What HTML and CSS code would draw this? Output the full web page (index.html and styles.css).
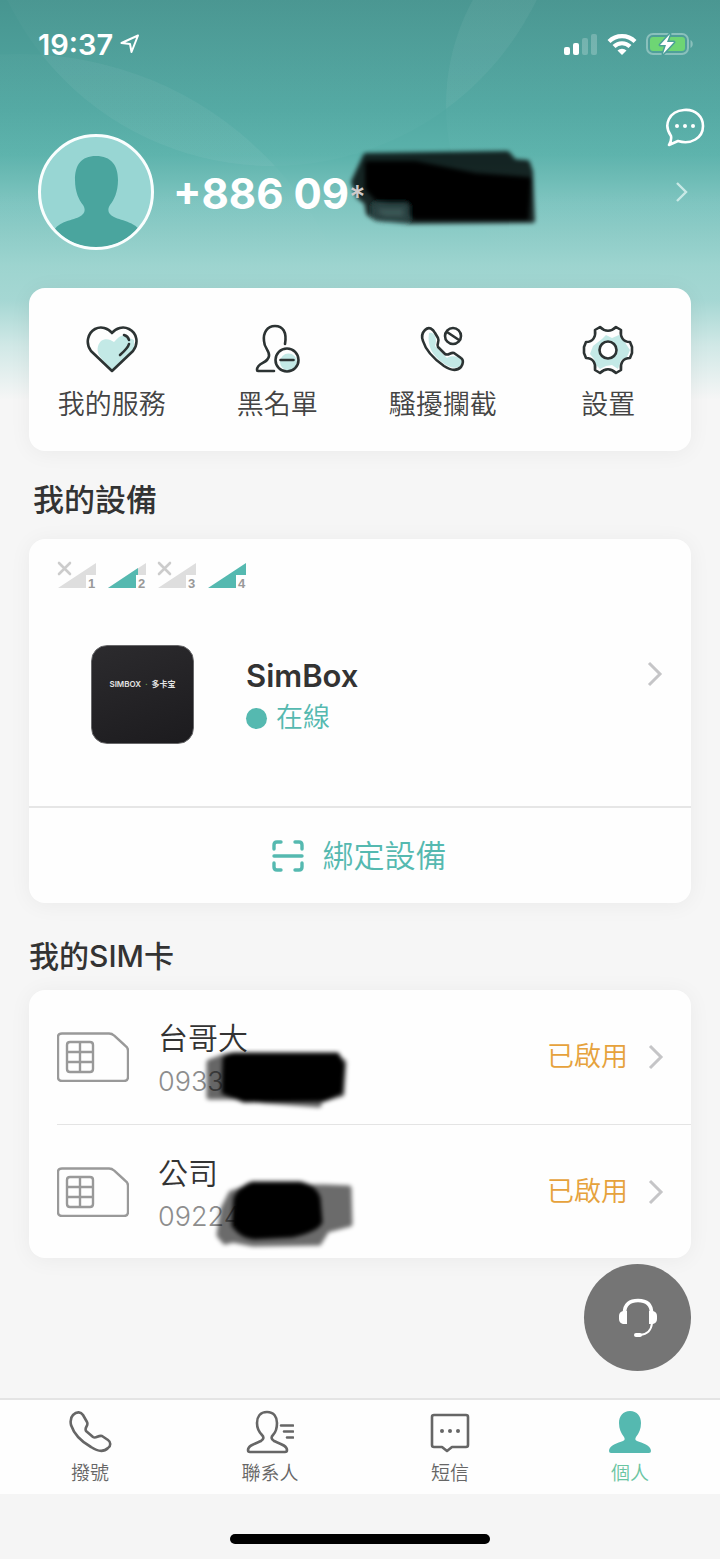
FILE: index.html
```html
<!DOCTYPE html>
<html lang="zh-Hant">
<head>
<meta charset="utf-8">
<meta name="viewport" content="width=device-width, initial-scale=1">
<title>個人</title>
<link rel="stylesheet" href="styles.css">
</head>
<body>
<div class="app">
  <svg class="backdrop" viewBox="0 0 720 300" preserveAspectRatio="xMidYMin slice" aria-hidden="true">
    <defs>
      <linearGradient id="fade" gradientUnits="userSpaceOnUse" x1="0" y1="0" x2="0" y2="270">
        <stop offset="0" stop-color="#fff" stop-opacity=".02"/>
        <stop offset=".6" stop-color="#fff" stop-opacity=".02"/>
        <stop offset="1" stop-color="#fff" stop-opacity="0"/>
      </linearGradient>
      <clipPath id="disc"><circle cx="272" cy="-128" r="294"/></clipPath>
    </defs>
    <circle cx="272" cy="-128" r="294" fill="url(#fade)"/>
    <circle cx="20" cy="400" r="346" fill="url(#fade)"/>
    <circle cx="666" cy="105" r="220" fill="url(#fade)"/>
    <g clip-path="url(#disc)" fill="#fff" fill-opacity=".03">
      <circle cx="20" cy="400" r="346"/>
      <circle cx="666" cy="105" r="220"/>
    </g>
  </svg>

  <header class="status">
    <div class="status-time">
      <span>19:37</span>
      <svg width="20" height="20" viewBox="0 0 20 20" fill="none" stroke="#fff" stroke-width="2" stroke-linejoin="round" aria-hidden="true"><path d="M18 1.500 1.500 9 10 10 11.500 18z"/></svg>
    </div>
    <div class="status-icons">
      <svg width="34" height="22" viewBox="0 0 34 22" fill="#fff" aria-hidden="true">
        <rect x="0" y="14" width="6" height="8" rx="2"/><rect x="9" y="10" width="6" height="12" rx="2"/>
        <rect x="18" y="5" width="6" height="17" rx="2" opacity=".22"/><rect x="27" y="1" width="6" height="21" rx="2" opacity=".22"/>
      </svg>
      <svg width="30" height="22" viewBox="0 0 30 22" aria-hidden="true">
        <g fill="none" stroke="#fff" stroke-width="4.200"><path d="M2 8.500a18.500 18.500 0 0 1 26 0"/><path d="M7 13.500a11.500 11.500 0 0 1 16 0"/></g>
        <path d="M10.500 17.500a6.500 6.500 0 0 1 9 0L15 22z" fill="#fff"/>
      </svg>
      <svg width="48" height="24" viewBox="0 0 48 24" aria-hidden="true">
        <rect x="1" y="2" width="41" height="20" rx="6" fill="none" stroke="#8ac0bc" stroke-width="2"/>
        <path d="M44.500 8c3 1.500 3 6.500 0 8z" fill="#8ac0bc"/>
        <rect x="4" y="5" width="35" height="14" rx="3" fill="#6ed574"/>
        <path d="M24 2 14 13h6l-3 9 11-12h-7z" fill="#fff" stroke="#4b9f99" stroke-width="3" stroke-linejoin="round" paint-order="stroke"/>
      </svg>
    </div>
  </header>

  <section class="profile">
    <svg class="avatar" width="116" height="116" viewBox="0 0 116 116" role="img" aria-label="頭像">
      <defs><clipPath id="face"><circle cx="58" cy="58" r="55.500"/></clipPath></defs>
      <circle cx="58" cy="58" r="56.500" fill="#98d6d3"/>
      <path clip-path="url(#face)" fill="#4aa59e" d="M58 22c-15 0-21 9-21 24 0 12 4 20 8 25 3 5 2 9-4 12-8 4-23 4-27 18v16h90v-16c-4-13-20-14-28-18-6-3-7-7-4-12 4-5 8-13 8-25 0-15-7-24-22-24z"/>
      <circle cx="58" cy="58" r="56.500" fill="none" stroke="#fafefe" stroke-width="3"/>
    </svg>
    <div class="phone">
      <svg class="scribble" width="192" height="84" viewBox="0 0 192 84" aria-hidden="true">
        <defs>
          <filter id="soft" x="-10%" y="-20%" width="120%" height="140%"><feGaussianBlur stdDeviation="2"/></filter>
        </defs>
        <g filter="url(#soft)" stroke-linejoin="round" stroke-width="6">
          <path d="M11 10 152 8l7 8 13 1 3 9 2 48-122 1-33-3-8-5-2-11-8-6-5-14z" fill="#000" stroke="#000" opacity=".8"/>
          <path d="M13 18h47l60 12 53 4-2 37H60L48 56 22 52 13 42z" fill="#000" stroke="#000"/>
          <path d="M21 60h30v13H30l-9-4z" fill="#3b5654" stroke="#2c4342"/>
        </g>
      </svg>
      <span class="phone-text">+886 09<span class="phone-star">*</span></span>
    </div>
    <div class="profile-actions">
      <button class="icon-button" aria-label="訊息">
        <svg width="42" height="40" viewBox="0 0 42 40" aria-hidden="true">
          <path d="M7 28C-1 17 5 3 20 2c12-1 19 7 19 16 0 12-12 19-25 15L5 37c2-3 2.500-6 2-9z" fill="none" stroke="#fff" stroke-width="2.600" stroke-linejoin="round"/>
          <g fill="#fff"><circle cx="13" cy="18" r="2"/><circle cx="21" cy="18" r="2"/><circle cx="29" cy="18" r="2"/></g>
        </svg>
      </button>
      <button class="icon-button icon-button--next" aria-label="個人資料">
        <svg width="14" height="22" viewBox="0 0 14 22" fill="none" stroke="#c9e9e6" stroke-width="2.400" aria-hidden="true"><path d="m2 2 9 9-9 9"/></svg>
      </button>
    </div>
  </section>

  <main class="main">
    <section class="card shortcuts">
      <button class="shortcut">
        <svg width="52" height="52" viewBox="0 0 52 52" fill="none" aria-hidden="true">
          <path d="M26 47 15 34c-5-6-4-13 0-17 4-3 9-2 13 1 4-4 6-7 11-6l9 4v10z" fill="#c3e9e6"/>
          <path d="M26 47 5 27C-1 19 2 9 9 5c6-3 13-1 17 4 4-5 11-7 17-4 8 4 10 14 4 22z" stroke="#2c3333" stroke-width="2.600" stroke-linejoin="round"/>
          <path d="M38 11q4 1 5 5M43 20q-1 4-9 11" stroke="#2c3333" stroke-width="2.600" stroke-linecap="round"/>
        </svg>
        <span>我的服務</span>
      </button>
      <button class="shortcut">
        <svg width="52" height="52" viewBox="0 0 52 52" fill="none" stroke="#2c3333" stroke-width="2.600" stroke-linecap="round" aria-hidden="true">
          <path d="M34 20C36 8 32 2 24 2s-12 7-11 15c0 7 6 10 5 15-1 8-12 6-12 14q0 1 1 1h16" stroke-linejoin="round"/>
          <circle cx="37.500" cy="38" r="8.500" fill="#c3e9e6" stroke="none"/>
          <circle cx="36" cy="36" r="11.500"/><path d="M29.500 36h13"/>
        </svg>
        <span>黑名單</span>
      </button>
      <button class="shortcut">
        <svg width="52" height="52" viewBox="0 0 52 52" fill="none" stroke="#2c3333" stroke-width="2.600" stroke-linecap="round" stroke-linejoin="round" aria-hidden="true">
          <path d="M12 9c5-2 9 6 6 13l12 12c4-4 15-1 17 4-4 8-13 7-21 1C15 31 10 22 12 9z" fill="#c3e9e6" stroke="none"/>
          <path d="M8 6c4-4 8-1 10 3l3 5c2 4-2 6 0 9l7 7c4 2 5-2 9-1l7 5c3 2 2 6 0 9-5 5-11 3-17-1C17 35 9 27 6 17 4 12 5 9 8 6z"/>
          <circle cx="36" cy="12" r="8"/><path d="m30 8 12 8"/>
        </svg>
        <span>騷擾攔截</span>
      </button>
      <button class="shortcut">
        <svg width="52" height="52" viewBox="0 0 52 52" fill="none" stroke="#2c3333" stroke-width="2.600" stroke-linejoin="round" aria-hidden="true">
          <path d="m20 15 4-4 6 3 7-3 4 3 3 6 4 6-3 7-6 3-3 9-6-4-6 1-6 3-4-4-2-6-4-5 3-8z" fill="#c3e9e6" stroke="none"/>
          <path d="m18 3-5 3c1 7-2 12-9 12l-2 5v6l2 5c7 0 10 5 9 12l5 3c5-5 11-5 16 0l5-3c-1-7 2-12 9-12l2-5v-6l-2-5c-7 0-10-5-9-12l-5-3c-5 5-11 5-16 0z"/>
          <circle cx="26" cy="26" r="8.500" fill="#fff"/>
        </svg>
        <span>設置</span>
      </button>
    </section>

    <h2 class="section-title section-title--inset">我的設備</h2>
    <section class="card">
      <div class="device">
        <div class="signals">
          <svg class="signal" width="40" height="29" viewBox="0 0 40 29" role="img"><path d="m1 27 38-25v12H29v13z" fill="#dedede"/><path d="m2 2 11 11M13 2 2 13" stroke="#ccc" stroke-width="2.600" stroke-linecap="round"/><text x="31" y="27">1</text></svg>
          <svg class="signal" width="40" height="29" viewBox="0 0 40 29" role="img"><path d="m1 27 38-25v12H29v13z" fill="#dedede"/><path d="m1 27 30-20v7h-2v13z" fill="#55b9b0"/><text x="31" y="27">2</text></svg>
          <svg class="signal" width="40" height="29" viewBox="0 0 40 29" role="img"><path d="m1 27 38-25v12H29v13z" fill="#dedede"/><path d="m2 2 11 11M13 2 2 13" stroke="#ccc" stroke-width="2.600" stroke-linecap="round"/><text x="31" y="27">3</text></svg>
          <svg class="signal" width="40" height="29" viewBox="0 0 40 29" role="img"><path d="m1 27 38-25v12H29v13z" fill="#55b9b0"/><text x="31" y="27">4</text></svg>
        </div>
        <a class="device-row" href="#device">
          <span class="device-photo"><span>SIMBOX</span><i>·</i><span>多卡宝</span></span>
          <span class="device-info">
            <strong class="device-name">SimBox</strong>
            <span class="device-state">在線</span>
          </span>
          <svg class="chevron" width="18" height="28" viewBox="0 0 18 28" aria-hidden="true"><path d="m4 3 11 11L4 25"/></svg>
        </a>
      </div>
      <button class="bind">
        <svg width="34" height="34" viewBox="0 0 34 34" fill="none" stroke="#55b9b0" stroke-width="3.400" stroke-linecap="round" aria-hidden="true"><path d="M3 10V6q0-3 3-3h4M24 3h4q3 0 3 3v4M3 24v4q0 3 3 3h4M24 31h4q3 0 3-3v-4M3 17h28"/></svg>
        <span>綁定設備</span>
      </button>
    </section>

    <h2 class="section-title">我的SIM卡</h2>
    <section class="card">
      <a class="sim" href="#sim1">
        <svg class="sim-icon" width="72" height="50" viewBox="0 0 72 50" aria-hidden="true"><path d="M5 1.500h47q3 0 5 2l11 10q3 2 3 5V45q0 4-4 4H5q-4 0-4-4V5q0-3.500 4-3.500zM13 10h20q3 0 3 3v24q0 3-3 3H13q-3 0-3-3V13q0-3 3-3zM23 10v30M10 20h26M10 30h26"/></svg>
        <span class="sim-body">
          <span class="sim-info">
            <span class="sim-name">台哥大</span>
            <span class="sim-number">0933
              <svg class="sim-scribble" width="154" height="64" viewBox="0 0 154 64" aria-hidden="true"><g filter="url(#soft)"><path d="M8 14 24 8h110l9 6-2 32-22 6-1 5-54-4-22-4H8z" opacity=".6"/><path d="M24 11q4-4 10-4h102l5 10-2 27-16 7-80 1-20-8z"/></g></svg>
            </span>
          </span>
          <span class="sim-state">已啟用</span>
          <svg class="chevron" width="18" height="28" viewBox="0 0 18 28" aria-hidden="true"><path d="m4 3 11 11L4 25"/></svg>
        </span>
      </a>
      <a class="sim sim--ruled" href="#sim2">
        <svg class="sim-icon" width="72" height="50" viewBox="0 0 72 50" aria-hidden="true"><path d="M5 1.500h47q3 0 5 2l11 10q3 2 3 5V45q0 4-4 4H5q-4 0-4-4V5q0-3.500 4-3.500zM13 10h20q3 0 3 3v24q0 3-3 3H13q-3 0-3-3V13q0-3 3-3zM23 10v30M10 20h26M10 30h26"/></svg>
        <span class="sim-body">
          <span class="sim-info">
            <span class="sim-name">公司</span>
            <span class="sim-number">09224
              <svg class="sim-scribble sim-scribble--wide" width="154" height="74" viewBox="0 0 154 74" aria-hidden="true"><g filter="url(#soft)"><path d="m8 58 4-26 8-16 18-6h76l24 1 1 36-23 6-8 13-66 1-20-4-8 2z" opacity=".58"/><path d="M25 21q5-10 16-14h48q14 3 18 14l2 24q-4 8-28 13l-38 2q-12-1-20-12z"/></g></svg>
            </span>
          </span>
          <span class="sim-state">已啟用</span>
          <svg class="chevron" width="18" height="28" viewBox="0 0 18 28" aria-hidden="true"><path d="m4 3 11 11L4 25"/></svg>
        </span>
      </a>
    </section>

    <button class="support" aria-label="客服">
      <svg width="40" height="40" viewBox="0 0 40 40" fill="none" stroke="#fff" aria-hidden="true">
        <path d="M6.500 15C6.500 6 12 2.500 20 2.500S33.500 6 33.500 15" stroke-width="3.600"/>
        <path d="M9 13v13H5q-4-1-4-5v-3q0-4 4-5zM31 13v13h4q4-1 4-5v-3q0-4-4-5z" fill="#fff" stroke="none"/>
        <path d="M34 25q-1 11-12 12" stroke-width="2"/><rect x="16" y="35" width="8" height="4" rx="2" fill="#fff" stroke="none"/>
      </svg>
    </button>
  </main>

  <nav class="tabs">
    <a class="tab" href="#dial">
      <svg width="44" height="44" viewBox="0 0 44 44" aria-hidden="true"><path d="M5 5c4-4 8-3 10 0l4 7c2 4-3 5-1 9l7 6c3 2 5-2 9-1l6 4c3 2 3 6 0 8-5 5-11 3-17-1C14 32 6 24 3 15 2 10 3 7 5 5z"/></svg>
      <span>撥號</span>
    </a>
    <a class="tab" href="#contacts">
      <svg width="48" height="44" viewBox="0 0 48 44" aria-hidden="true"><path d="M21 2C14 2 11 7 11 13c0 5 2 9 5 12 2 2 2 4-1 6-4 2-13 4-13 9q0 2 2 2h35q2 0 2-2c0-5-9-7-13-9-3-2-3-4-1-6 3-3 4-7 4-12 0-6-3-11-10-11zM35 15.500h12M38 21.500h9M41 27.500h6"/></svg>
      <span>聯系人</span>
    </a>
    <a class="tab" href="#messages">
      <svg width="44" height="44" viewBox="0 0 44 44" aria-hidden="true"><path d="M6 5h32q2 0 2 2v28q0 2-2 2H24l-5 4-5-4H6q-2 0-2-2V7q0-2 2-2z"/><g class="tab-dots"><circle cx="14" cy="21" r="2"/><circle cx="22" cy="21" r="2"/><circle cx="30" cy="21" r="2"/></g></svg>
      <span>短信</span>
    </a>
    <a class="tab tab--active" href="#me" aria-current="page">
      <svg width="44" height="44" viewBox="0 0 44 44" aria-hidden="true"><path d="M22 1c-7 0-11 5-11 12 0 6 2 10 5 14 1 2 1 3-1 4-5 2-14 4-14 10q0 2 2 2h38q2 0 2-2c0-6-9-8-14-10-2-1-2-2-1-4 3-4 5-8 5-14 0-7-4-12-11-12z"/></svg>
      <span>個人</span>
    </a>
  </nav>
  <div class="home"><div class="home-bar"></div></div>
</div>
</body>
</html>
```
FILE: styles.css
```css
* { box-sizing: border-box; }

body {
  margin: 0;
  font-family: Inter, "Noto Sans CJK TC", sans-serif;
  color: #333;
  background: #f6f6f6;
}

button {
  border: 0;
  padding: 0;
  background: none;
  font: inherit;
  color: inherit;
  cursor: pointer;
}

a { color: inherit; text-decoration: none; }
svg { display: block; flex: none; }

.app {
  position: relative;
  display: flex;
  flex-direction: column;
  min-height: 100vh;
  background: linear-gradient(#479590 0, #52a8a2 110px, #5bb2ab 155px, #7fc5c0 205px, #9dd4cf 265px, #a5d7d3 300px, #d0e8e6 345px, #f6f6f6 400px);
}

.backdrop {
  position: absolute;
  top: 0;
  left: 0;
  width: 100%;
  height: 300px;
}

.status {
  position: relative;
  display: flex;
  justify-content: space-between;
  align-items: center;
  height: 88px;
  padding: 0 26px 0 38px;
  color: #fff;
}

.status-time {
  display: flex;
  align-items: center;
  gap: 7px;
  font-size: 29px;
  font-weight: 600;
}

.status-icons { display: flex; align-items: center; gap: 9px; }

.profile {
  position: relative;
  display: flex;
  align-items: flex-end;
  padding: 18px 13px 38px 38px;
}

.phone {
  position: relative;
  flex: 1;
  margin-left: 19px;
  padding-top: 12px;
  line-height: 104px;
  font-size: 42px;
  font-weight: 700;
  color: #fff;
  white-space: nowrap;
}

.phone-text { position: relative; }
.phone-star { font-size: 32px; font-weight: 500; color: #cfcaca; }

.scribble { position: absolute; left: 182px; top: 16px; overflow: visible; }

.profile-actions {
  display: flex;
  flex-direction: column;
  align-items: center;
  height: 144px;
}

.icon-button {
  display: flex;
  align-items: center;
  justify-content: center;
  width: 44px;
  height: 44px;
}

.icon-button--next { margin-top: 20px; padding-right: 6px; }

.main {
  position: relative;
  flex: 1;
  padding: 0 29px 140px;
}

.card {
  border-radius: 16px;
  background: #fefefe;
  box-shadow: 0 2px 22px rgba(0, 0, 0, .05);
  overflow: hidden;
}

.shortcuts {
  display: grid;
  grid-template-columns: repeat(4, 1fr);
  padding: 36px 0 26px;
}

.shortcut {
  display: flex;
  flex-direction: column;
  align-items: center;
  gap: 9px;
  color: #444;
  font-size: 27px;
  line-height: 40px;
  font-weight: 350;
}

.section-title {
  margin: 0;
  padding: 33px 0 14px;
  font-size: 30px;
  line-height: 40px;
  font-weight: 500;
}

.section-title--inset {
  padding: 29px 0 19px 4px;
  font-size: 31px;
}

.device {
  padding: 22px 28px 62px;
  border-bottom: 2px solid #e6e6e6;
}

.signals { display: flex; gap: 10px; }

.signal text {
  font: 700 13px "Liberation Sans", sans-serif;
  fill: #999;
}

.device-row {
  display: flex;
  align-items: center;
  margin-top: 55px;
}

.device-photo {
  display: flex;
  justify-content: center;
  gap: 4px;
  width: 103px;
  height: 99px;
  margin-left: 34px;
  padding-top: 32px;
  border: 1px solid #68686a;
  border-radius: 16px;
  background: linear-gradient(160deg, #2c2b2e, #1c1b1e);
  color: #e3e3e3;
  font-size: 8px;
  font-weight: 600;
  line-height: 12px;
}

.device-photo i { color: #6c9c4c; }

.device-info {
  display: flex;
  flex-direction: column;
  flex: 1;
  gap: 4px;
  margin-left: 52px;
  padding-top: 3px;
}

.device-row .chevron { margin-bottom: 41px; }

.device-name { font-size: 31px; line-height: 40px; font-weight: 600; }

.device-state {
  display: flex;
  align-items: center;
  gap: 9px;
  color: #55b9b0;
  font-size: 27px;
  line-height: 36px;
  font-weight: 350;
}

.device-state::before {
  content: "";
  width: 21px;
  height: 21px;
  border-radius: 50%;
  background: #55b9b0;
}

.chevron {
  fill: none;
  stroke: #c5c5c7;
  stroke-width: 3;
}

.bind {
  display: flex;
  align-items: center;
  justify-content: center;
  gap: 18px;
  width: 100%;
  height: 95px;
  padding-right: 3px;
  color: #55b9b0;
  font-size: 31px;
  line-height: 40px;
  font-weight: 350;
}

.sim {
  display: flex;
  align-items: center;
  gap: 29px;
  height: 134px;
  margin-left: 28px;
}

.sim--ruled { border-top: 1px solid #e4e4e4; }

.sim-icon { fill: none; stroke: #999; stroke-width: 2.4; }

.sim-body {
  display: flex;
  flex: 1;
  align-items: center;
  padding-right: 27px;
}

.sim-info {
  display: flex;
  flex-direction: column;
  flex: 1;
  gap: 4px;
  padding-top: 2px;
}

.sim-name { font-size: 30px; line-height: 44px; font-weight: 350; }

.sim-number {
  position: relative;
  font-size: 27px;
  line-height: 36px;
  font-weight: 350;
  color: #8d8d8d;
}

.sim-scribble {
  position: absolute;
  left: 43px;
  top: -16px;
  fill: #000;
  stroke: #000;
  stroke-width: 5;
  stroke-linejoin: round;
}

.sim-scribble--wide { left: 53px; top: -22px; }

.sim-state {
  margin-right: 18px;
  color: #e6a23c;
  font-size: 27px;
  line-height: 40px;
  font-weight: 350;
}

.support {
  position: absolute;
  right: 29px;
  bottom: 27px;
  display: flex;
  align-items: center;
  justify-content: center;
  width: 107px;
  height: 107px;
  border-radius: 50%;
  background: #757575;
}

.tabs {
  display: grid;
  grid-template-columns: repeat(4, 1fr);
  border-top: 2px solid #e4e4e4;
  background: #fefefe;
}

.tab {
  display: flex;
  flex-direction: column;
  align-items: center;
  gap: 5px;
  padding: 10px 0 5px;
  color: #666;
  font-size: 19px;
  line-height: 30px;
  font-weight: 350;
}

.tab svg {
  fill: none;
  stroke: #666;
  stroke-width: 2.6;
  stroke-linecap: round;
  stroke-linejoin: round;
}

.tab .tab-dots { fill: #666; stroke: none; }

.tab--active { color: #6bc5a2; }
.tab--active svg { fill: #55b9b0; stroke: none; }

.home {
  display: flex;
  align-items: flex-end;
  justify-content: center;
  height: 65px;
  padding-bottom: 15px;
  background: #f5f5f5;
}

.home-bar {
  width: 36%;
  height: 10px;
  border-radius: 5px;
  background: #000;
}
```
